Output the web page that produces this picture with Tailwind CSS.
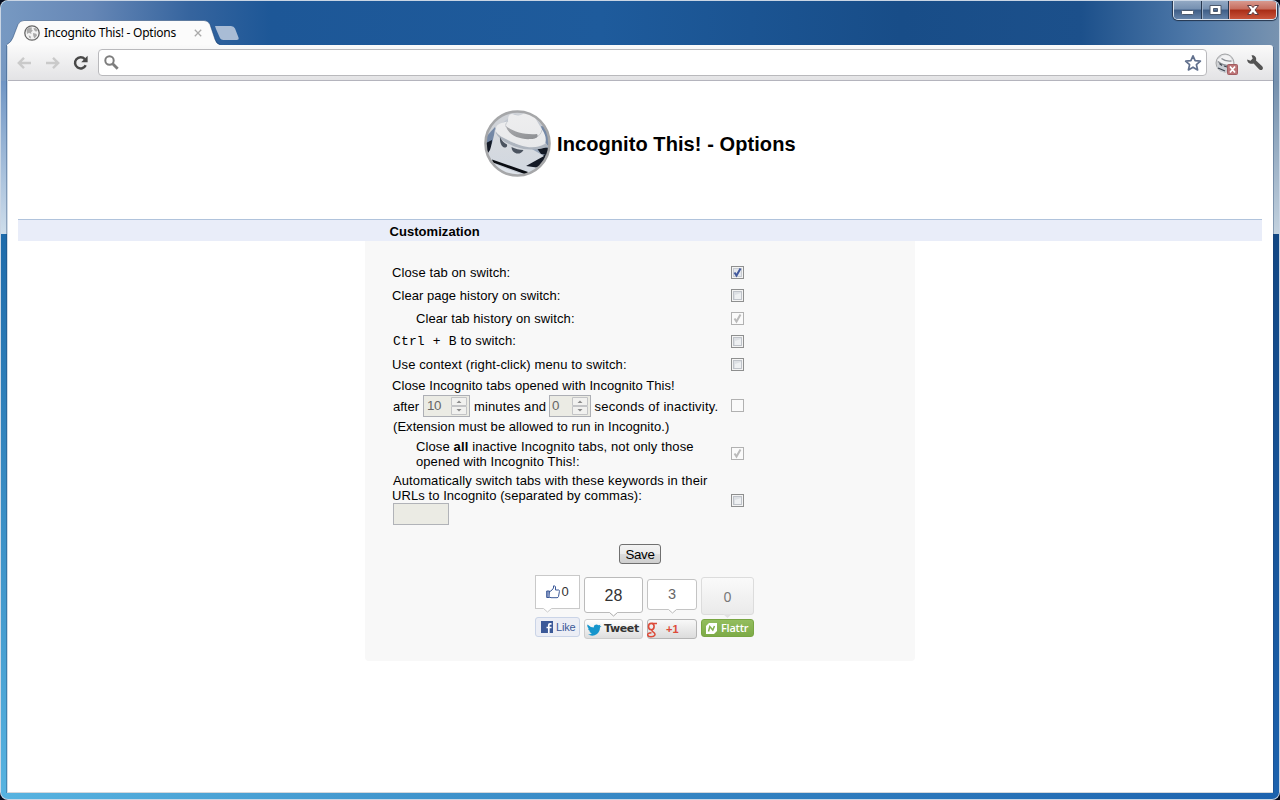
<!DOCTYPE html>
<html lang="en">
<head>
<meta charset="utf-8">
<title>Incognito This! - Options</title>
<script src="https://cdn.jsdelivr.net/npm/@tailwindcss/browser@4"></script>
</head>
<body class="w-[1280px] h-[800px] overflow-hidden bg-[#040b1c] font-['Liberation_Sans',Arial,sans-serif] text-[13px] text-black">
<svg width="0" height="0" class="absolute">
  <defs>
    <linearGradient id="silver" x1="0" y1="0" x2="0" y2="1"><stop offset="0" stop-color="#d9dbdf"/><stop offset="1" stop-color="#d0d7e0"/></linearGradient>
    <linearGradient id="hat" x1="0" y1="0" x2="0" y2="1"><stop offset="0" stop-color="#eeeeef"/><stop offset="1" stop-color="#e8e9eb"/></linearGradient>
    <linearGradient id="brim" x1="0" y1="0" x2="1" y2="1"><stop offset="0" stop-color="#a8a9ac"/><stop offset="1" stop-color="#8d8f93"/></linearGradient>
    <clipPath id="disc"><circle cx="33.500" cy="33.500" r="32"/></clipPath>
    <symbol id="spy" viewBox="0 0 67 67">
      <g clip-path="url(#disc)">
        <rect width="67" height="67" fill="#c2c8d1"/>
        <path d="M0 0h67v22L52 10 30 4 12 18 0 24z" fill="#d0d3d8"/>
        <path d="M57 16l10 2v22l-6-8zM2 27l9-10 3 12-7 14-5-4z" fill="#7488a6"/>
        <path d="M44 39l23-3v12l-8 9-14-3z" fill="#9aa8bb"/>
        <path d="M2 33l6-3-1 12-5 3zM52 37l14 1-2 7-7-1zM41 55l21-11-2 9-13 8z" fill="#141a26"/>
        <path d="M11 19c-1 8-3 14-5 21l-6 9 7 3 37 14 12-8-14-2 18-10-14-8-8-4-16-4z" fill="url(#silver)"/>
        <path d="M8 53l34 13H24L6 57z" fill="#dde2e9"/>
        <path d="M13 22c3 6 10 10 18 13s23 5 32 0" fill="none" stroke="#aeb5bf" stroke-width="3"/>
        <path d="M12 18C13 12 22 13 24 11c0-4 1-7 4-7 5 2 8 2 12-.5 4-1 8 0 10 3 3 4 5 8 8 13 3 4 5 10 3 14-5 4-15 5-24 2-8-3-14-6-20-9-4-3-6-5-5-8.500z" fill="url(#hat)"/>
        <path d="M24 11c-2 2-3 4-2 6M58 20c-1 4-3 6-6 7" fill="none" stroke="#c7cacf"/>
        <path d="M22 16c7 6 19 9 31 8 2 3-1 5-6 5-11 1-23-4-25-13z" fill="url(#brim)"/>
        <path d="M16 27c2 4 4 6 7 7.500.5 2-.5 3-2.500 3-3-1-5-5-4.500-10.500zM27.500 37c4 2 8 3 12 3-2 3-4 4-7 3.500-3-1-5-3-5-6.500z" fill="#4b535f"/>
        <path d="M8 49.500l36 12.500-2 2.500L9 52.500z" fill="#090c12"/>
      </g>
      <circle cx="33.500" cy="33.500" r="32" fill="none" stroke="#a6a7a9" stroke-width="2.600"/>
    </symbol>
  </defs>
</svg>

<div class="w-[1280px] h-[800px] rounded-lg bg-[#c9d5e4] p-px">
<div class="relative flex flex-col w-full h-full rounded-[7px] pl-[7px] pr-[6px] pt-[18px] pb-[6px] overflow-hidden bg-[linear-gradient(90deg,#57b3e0,#3e92cb_35%,#1c62ae)]">
  <!-- frame glass -->
  <div class="absolute inset-x-0 top-0 h-[233px] bg-[linear-gradient(90deg,#7799c2_0px,#6687b6_90px,#35649e_190px,#1d5797_270px,#1e5b9c_600px,#184d88_900px,#1c508b_1080px,#4e78a8_1190px,#7893b0_1278px)]"></div>
  <div class="absolute left-0 top-[80px] w-[6px] h-[153px] bg-linear-to-b from-[#6f95c4] to-[#cfdeeb]"></div>
  <div class="absolute left-0 top-[233px] w-[6px] bottom-[6px] bg-linear-to-b from-[#1e6baa] to-[#57b3e0]"></div>
  <div class="absolute left-[5px] top-[44px] w-px bottom-[6px] bg-[#1d3d66]/35"></div>
  <div class="absolute left-[6px] top-[44px] w-px bottom-[6px] bg-[#cfdae6]"></div>
  <div class="absolute right-0 top-[80px] w-[6px] h-[153px] bg-linear-to-b from-[#7590ad] to-[#c3d2df]"></div>
  <div class="absolute right-0 top-[233px] w-[6px] bottom-[6px] bg-linear-to-b from-[#124784] to-[#1c62ae]"></div>
  <div class="absolute right-[5px] top-[46px] w-px bottom-[6px] bg-[#1d3d66]/35"></div>

  <!-- window buttons -->
  <div class="absolute right-[2px] top-0 flex w-[104px] h-[19px] rounded-b-[5px] border border-t-0 border-[#dbe3ed] overflow-hidden shadow-[0_0_1px_1px_#24354d]">
    <div class="w-[28px] border-r border-[#26374f] bg-[linear-gradient(#92a8c3,#7590b1_45%,#3e5d86_50%,#6583a9)] flex items-end justify-center pb-[3px]"><svg width="13" height="6" viewBox="0 0 13 6"><rect x=".5" y=".5" width="12" height="4" rx="1" fill="#fff" stroke="#4c596c"/></svg></div>
    <div class="w-[27px] border-r border-[#26374f] border-l border-l-[#9db0c8] bg-[linear-gradient(#92a8c3,#7590b1_45%,#3e5d86_50%,#6583a9)] flex items-center justify-center"><svg width="13" height="11" viewBox="0 0 13 11"><path fill-rule="evenodd" d="M1 .5h11v9H1zm3.500 3v3h4v-3z" fill="#fff" stroke="#4c596c"/></svg></div>
    <div class="flex-1 border-l border-[#e6a59b] bg-[linear-gradient(#d8998e,#c66c5d_45%,#a92c16_50%,#c9553c)] flex items-center justify-center"><svg width="14" height="11" viewBox="0 0 14 11"><path d="M1.500.5h3.800L7 2.600 8.700.5h3.800L9 5l3.500 4.500H8.700L7 7.400 5.300 9.500H1.500L5 5z" fill="#fff" stroke="#5b3a40"/></svg></div>
  </div>

  <!-- tab strip -->
  <div class="relative h-[26px] shrink-0 flex">
    <svg class="absolute -left-px top-0" width="236" height="27" viewBox="0 0 236 27">
      <path d="M0 27v-1.500q4-2 6-7l5-13Q13 1.500 17 1.500H197q4 0 6 4l5 15q1.500 4.500 5 5.500v1z" fill="#fbfbfb"/>
      <path d="M0 25.500q4-2 6-7l5-13Q13 1.500 17 1.500H197q4 0 6 4l5 15q1.500 4.500 5 5" fill="none" stroke="#153765" stroke-opacity=".45"/>
      <path d="M208 7h16q3 0 4 2.500l3.500 9q.8 2.500-2 2.500h-13q-3 0-4-3l-3.500-8z" fill="#a9bcd5"/>
    </svg>
    <div class="relative flex items-center pl-[16px] pt-[2px] w-[200px] text-[12px] font-['Noto_Sans','Open_Sans',sans-serif]">
      <svg width="16" height="16" viewBox="0 0 16 16"><circle cx="8" cy="8" r="7.200" fill="#f3f3f3" stroke="#666" stroke-width="1.300"/><path d="M2.500 4.500 5 2.300l3 .2-.5 2 1.300 1-1.800 2 .5 1.500-2.500-1.200L3 9zM9.500 3l2.500.2 1.800 2.300-1.800 1.200-1.800-1.500zM9 8l3.200.8.9 1.400-2.600 3.300-1.200-2.500zM4.500 10.500l2 .4.5 2.600-1.500-.6z" fill="#aaa"/></svg>
      <span class="ml-[4px] leading-4 whitespace-nowrap w-[134px] tracking-[-0.240px]">Incognito This! - Options</span>
      <svg class="ml-[16px] shrink-0" width="8" height="8" viewBox="0 0 8 8"><path d="m.8.8 6.400 6.400m0-6.400L.8 7.200" stroke="#aaa" stroke-width="1.300"/></svg>
    </div>
  </div>

  <!-- toolbar -->
  <div class="relative h-[36px] shrink-0 flex items-center bg-linear-to-b from-[#fafafa] to-[#e3e3e5] border-b border-[#b4b4bd] rounded-tr-[3px] pl-[9px]">
    <svg width="15" height="14" viewBox="0 0 15 14"><path d="M14 7H2m5-5.200L1.800 7 7 12.200" fill="none" stroke="#cacaca" stroke-width="2.400"/></svg>
    <svg class="ml-[13px]" width="15" height="14" viewBox="0 0 15 14"><path d="M1 7h12M8 1.800 13.200 7 8 12.200" fill="none" stroke="#cacaca" stroke-width="2.400"/></svg>
    <svg class="ml-[13px]" width="16" height="16" viewBox="0 0 16 16"><path d="M11.800 4.100A5.600 5.600 0 1 0 12.700 10.300" fill="none" stroke="#484848" stroke-width="2.500"/><path d="M14.600.8v6.400H8.200z" fill="#484848"/></svg>
    <div class="ml-[9px] w-[1109px] h-[27px] rounded-[4px] border border-[#b9b9bc] bg-white flex items-center justify-between pl-[5px] pr-[4px]">
      <svg width="15" height="15" viewBox="0 0 15 15"><circle cx="5.500" cy="5.500" r="4.200" fill="none" stroke="#7d7d7d" stroke-width="2"/><path d="m8.700 8.700 5 5" stroke="#7d7d7d" stroke-width="2.800"/></svg>
      <svg width="18" height="18" viewBox="0 0 18 18"><path d="m9 1.800 2.100 4.900 5.300.5-4 3.500 1.200 5.200L9 13.200l-4.600 2.700 1.200-5.200-4-3.500 5.300-.5z" fill="#fff" stroke="#61708d" stroke-width="1.700" stroke-linejoin="round"/></svg>
    </div>
    <div class="relative ml-[8px] w-[24px] h-[24px]">
      <svg class="absolute left-0 top-[2px]" width="20" height="20" viewBox="0 0 20 20"><circle cx="10" cy="10" r="9" fill="#d0d2d5" stroke="#a3a4a6"/><path d="M2 15l3-5 10 3 4 2-5 4H6z" fill="#c9cdd3"/><path d="M2.500 7C4 5 6 5 7 2.500l4-.5 4 1.500L18 9v3c-6 1-14-1-15.500-5z" fill="#f2f2f3"/><path d="M6.500 5.500c3 2.500 6 3 10 2.500M3 8.500c4 3.500 9 4.500 15 4" fill="none" stroke="#8c8f95" stroke-width="1.300"/><path d="m4.500 10.500 2.500 2m2 .5 3 1M3 15l7 3" fill="none" stroke="#3f4650" stroke-width="1.300"/></svg>
      <svg class="absolute left-[12px] top-[13px]" width="11" height="11" viewBox="0 0 11 11"><rect x=".5" y=".5" width="10" height="10" rx="1" fill="#bd7476" stroke="#a25c60"/><path d="m3 2.500 5 6m0-6-5 6" stroke="#fff" stroke-width="1.700"/></svg>
    </div>
    <svg class="ml-[7px]" width="18" height="18" viewBox="0 0 18 18"><path d="M1.200 5.500 4.500 6.700 6.700 4.500 5.500 1.300C8.800.8 11 3.600 10 6.600l6.200 5.700q1.600 1.700.2 3.100t-3.100 0L7.600 9.500C4.500 10.700 1 8.900 1.200 5.500z" fill="#545454"/></svg>
  </div>

  <!-- page -->
  <div class="relative flex-1 bg-white border-b border-[#d5d8dc]">
    <header class="flex items-center h-[138px] pb-[13px] pl-[476px]">
      <svg width="67" height="67"><use href="#spy" width="67" height="67"/></svg>
      <h1 class="ml-[6px] mt-px text-[20px] leading-6 font-bold whitespace-nowrap tracking-[0.080px]">Incognito This! - Options</h1>
    </header>
    <div class="ml-[10px] mr-[11px] h-[22px] bg-[#e9edf9] border-t border-[#b0c3dc] pl-[371.500px] pt-[2px] font-bold leading-[19px] tracking-[0.050px]">Customization</div>
    <main class="w-[550px] h-[420px] ml-[357px] bg-[#f8f8f8] rounded-b-[4px] pt-[20px]">
      <div class="pl-[27px] grid grid-cols-[339px_14px] items-center whitespace-nowrap leading-[15px]">
        <div class="h-[23px] leading-[23px] tracking-[0.100px]">Close tab on switch:</div>
        <svg width="13" height="13" viewBox="0 0 13 13"><rect x=".5" y=".5" width="12" height="12" fill="#f4f4f4" stroke="#8e8f8f"/><rect x="2.500" y="2.500" width="8" height="8" fill="#e4e7ec" stroke="#c7cbd1"/><path d="m3.500 6.500 2 3 4-7" fill="none" stroke="#42599c" stroke-width="2"/></svg>
        <div class="h-[23px] leading-[23px] tracking-[0.050px]">Clear page history on switch:</div>
        <svg width="13" height="13" viewBox="0 0 13 13"><rect x=".5" y=".5" width="12" height="12" fill="#f4f4f4" stroke="#8e8f8f"/><rect x="2.500" y="2.500" width="8" height="8" fill="#dde0e4" stroke="#bfc3c9"/><path d="M4 10V6l6-2v6z" fill="#eef0f2"/></svg>
        <div class="h-[23px] leading-[23px] pl-[24px] tracking-[0.090px]">Clear tab history on switch:</div>
        <svg width="13" height="13" viewBox="0 0 13 13"><rect x=".5" y=".5" width="12" height="12" fill="#fafafa" stroke="#b1b1b1"/><path d="m3.500 6.500 2 3 4-7" fill="none" stroke="#bababa" stroke-width="2"/></svg>
        <div class="h-[23px] leading-[22px] pl-px tracking-[0.150px]"><span class="font-['Liberation_Mono',monospace]">Ctrl + B</span> to switch:</div>
        <svg width="13" height="13" viewBox="0 0 13 13"><rect x=".5" y=".5" width="12" height="12" fill="#f4f4f4" stroke="#8e8f8f"/><rect x="2.500" y="2.500" width="8" height="8" fill="#dde0e4" stroke="#bfc3c9"/><path d="M4 10V6l6-2v6z" fill="#eef0f2"/></svg>
        <div class="h-[23px] leading-[23px] tracking-[0.120px]">Use context (right-click) menu to switch:</div>
        <svg width="13" height="13" viewBox="0 0 13 13"><rect x=".5" y=".5" width="12" height="12" fill="#f4f4f4" stroke="#8e8f8f"/><rect x="2.500" y="2.500" width="8" height="8" fill="#dde0e4" stroke="#bfc3c9"/><path d="M4 10V6l6-2v6z" fill="#eef0f2"/></svg>

        <div class="h-[61px] pl-px">
          <div class="h-[18px] leading-[19px] -ml-px tracking-[0.070px]">Close Incognito tabs opened with Incognito This!</div>
          <div class="h-[23px] flex items-center">
            <span class="w-[30px] pt-px">after</span>
            <span class="flex justify-between w-[47px] h-[22px] border border-[#adafb5] bg-[#ebebe4] text-[13.330px] leading-[20px] text-[#666] pl-[3px] pr-[2px] items-center tracking-[-0.500px]">10<svg width="16" height="18" viewBox="0 0 16 18"><path d="M.5.5h15v8H.5zm0 9h15v8H.5z" fill="#f1f1ef" stroke="#c3c4c6"/><path d="m5.500 6 2.500-2.500L10.500 6zm0 6L8 14.500l2.500-2.500z" fill="#8b8b8b"/></svg></span>
            <span class="w-[79px] pl-[4px] pt-px tracking-[0.120px]">minutes and</span>
            <span class="flex justify-between w-[42px] h-[22px] border border-[#adafb5] bg-[#ebebe4] text-[13.330px] leading-[20px] text-[#666] pl-[2px] pr-[2px] items-center">0<svg width="16" height="18" viewBox="0 0 16 18"><path d="M.5.5h15v8H.5zm0 9h15v8H.5z" fill="#f1f1ef" stroke="#c3c4c6"/><path d="m5.500 6 2.500-2.500L10.500 6zm0 6L8 14.500l2.500-2.500z" fill="#8b8b8b"/></svg></span>
            <span class="pl-[3.500px] pt-px tracking-[0.220px]">seconds of inactivity.</span>
          </div>
          <div class="h-[19px] leading-[19px] tracking-[0.050px]">(Extension must be allowed to run in Incognito.)</div>
        </div>
        <svg class="mb-[2px]" width="13" height="13" viewBox="0 0 13 13"><rect x=".5" y=".5" width="12" height="12" fill="#fafafa" stroke="#b1b1b1"/></svg>

        <div class="h-[34px] pt-[2px] pl-[24px]"><span class="tracking-[0.120px]">Close <b>all</b> inactive Incognito tabs, not only those</span><br><span class="tracking-[0.070px]">opened with Incognito This!:</span></div>
        <svg class="mb-[2px]" width="13" height="13" viewBox="0 0 13 13"><rect x=".5" y=".5" width="12" height="12" fill="#fafafa" stroke="#b1b1b1"/><path d="m3.500 6.500 2 3 4-7" fill="none" stroke="#bababa" stroke-width="2"/></svg>

        <div class="h-[58px] pt-[2px] pl-px"><span class="tracking-[0.110px]">Automatically switch tabs with these keywords in their</span><br><span class="-ml-px tracking-[0.070px]">URLs to Incognito (separated by commas):</span>
          <div class="w-[56px] h-[22px] border border-[#b1b3b8] bg-[#ebebe4]"></div>
        </div>
        <svg width="13" height="13" viewBox="0 0 13 13"><rect x=".5" y=".5" width="12" height="12" fill="#f4f4f4" stroke="#8e8f8f"/><rect x="2.500" y="2.500" width="8" height="8" fill="#dde0e4" stroke="#bfc3c9"/><path d="M4 10V6l6-2v6z" fill="#eef0f2"/></svg>
      </div>

      <button class="block mx-auto mt-[15px] w-[42px] h-[20px] rounded-[3px] border border-[#707070] bg-[linear-gradient(#f3f3f3,#ebebeb_50%,#dcdcdc_50%,#cfcfcf)] text-[13.330px] leading-[19px] tracking-[-0.350px]">Save</button>

      <div class="flex items-start gap-[4px] pl-[170px] mt-[11px]">
        <div class="w-[45px]">
          <div class="relative h-[34px] border border-[#c9c9c9] bg-white flex items-center justify-center gap-[2px] text-[13px] text-[#333] pr-px">
            <svg width="14" height="14" viewBox="0 0 14 14"><path d="M.7 6h2.800v6.500H.7z" fill="#8596c2" stroke="#3b5998"/><path d="M4 6.500 6 5l1.500-2V.9q1.500-.5 2 1V5h3.200q1 .2.7 1.500l-.9 5q-.3 1.200-1.500 1.200H5l-1.500-.6" fill="#fff" stroke="#3b5998"/></svg><span class="w-[7px]">0</span>
            <svg class="absolute left-[6px] top-[32px]" width="11" height="6" viewBox="0 0 11 6"><path d="M1 0 5.500 4 10 0z" fill="#fff"/><path d="m1.500.5 4 3.500 4-3.500" fill="none" stroke="#c9c9c9"/></svg>
          </div>
          <div class="mt-[8px] h-[20px] rounded-[3px] border border-[#cad4e7] bg-[#eceef5] flex items-center gap-[3px] pl-[5px] text-[11px] text-[#3b5998] tracking-[-0.200px]"><svg width="12" height="12" viewBox="0 0 12 12"><path d="M0 0h12v12H0z" fill="#3b5998"/><path d="M10.500 2.800H9q-1.200 0-1.200 1.300V12M5.500 6.500h5" fill="none" stroke="#fff" stroke-width="1.700"/></svg>Like</div>
        </div>
        <div class="w-[59px] pt-[2px]">
          <div class="relative h-[36px] rounded-[3px] border border-[#bbb] bg-white flex items-center justify-center text-[16px] text-[#333] pt-px">28
            <svg class="absolute left-[23px] top-[34px]" width="11" height="6" viewBox="0 0 11 6"><path d="M1 0 5.500 4 10 0z" fill="#fff"/><path d="m1.500.5 4 3.500 4-3.500" fill="none" stroke="#aaa"/></svg>
          </div>
          <div class="mt-[6px] h-[20px] rounded-[3px] border border-[#ccc] bg-linear-to-b from-white to-[#dedede] flex items-center gap-[2px] pl-[2px] pt-px font-bold text-[11px] text-[#333] font-['DejaVu_Sans',sans-serif] tracking-[-0.350px]"><svg class="shrink-0" width="15" height="12" viewBox="0 0 15 12"><path d="M.5.5Q3 3.200 6.800 3.500 6.500.6 9.300.4q1.300 0 2.200.9L13.500.7l-.8 1.500 1.800-.2-1.500 1.600Q12.800 8 10 10q-4.200 3-9 .5 2.500 0 3.800-1.300-2-.3-2.500-2h1Q1 6.300 1 4.500l1 .2Q-.4 3 .5.5z" fill="#1595cc"/></svg>Tweet</div>
        </div>
        <div class="w-[50px] pt-[4px]">
          <div class="relative h-[31px] rounded-[3px] border border-[#c4c4c4] bg-white flex items-center justify-center text-[14.500px] text-[#666] pt-px">3
            <svg class="absolute left-[19px] top-[29px]" width="11" height="6" viewBox="0 0 11 6"><path d="M1 0 5.500 4 10 0z" fill="#fff"/><path d="m1.500.5 4 3.500 4-3.500" fill="none" stroke="#bbb"/></svg>
          </div>
          <div class="mt-[9px] h-[20px] rounded-[3px] border border-[#b5b5b5] bg-linear-to-b from-[#f8f8f8] to-[#dcdcdc] flex items-center text-[11px] font-bold text-[#dd4b39]"><svg class="-ml-px mt-[2px]" width="11" height="16" viewBox="0 0 11 16"><path d="M10 1.500H5" fill="none" stroke="#dd4b39" stroke-width="1.500"/><ellipse cx="4.300" cy="4.600" rx="2.800" ry="3.200" fill="none" stroke="#dd4b39" stroke-width="1.600"/><path d="M5.500 7.500q-1.500 1 .5 2.300C9.500 12 8 14.800 4 14.800S-1 11 4.500 10.700" fill="none" stroke="#dd4b39" stroke-width="1.500"/></svg><span class="ml-[8px]">+1</span></div>
        </div>
        <div class="w-[53px] pt-[2px]">
          <div class="relative h-[38px] rounded-[3px] border border-[#dcdcdc] bg-linear-to-b from-[#fafafa] to-[#eaeaea] flex items-center justify-center text-[14px] text-[#777] font-['Noto_Sans',sans-serif]">0
            <svg class="absolute left-[20px] top-[36px]" width="11" height="6" viewBox="0 0 11 6"><path d="M1 0 5.500 4 10 0z" fill="#e2e2e2"/></svg>
          </div>
          <div class="mt-[4px] h-[18px] rounded-[3px] border border-[#79a643] bg-linear-to-b from-[#93bd5e] to-[#7dab47] flex items-center gap-[4px] pl-[4px] text-[11px] text-white"><svg width="11" height="11" viewBox="0 0 11 11"><path d="M3 0h8v8l-3 3H0V3z" fill="#fff"/><path d="m2.500 8.500 1.300-5 3 3.500 1.700-4" fill="none" stroke="#84b14f" stroke-width="1.500"/></svg><span class="font-['Open_Sans',sans-serif] font-semibold tracking-[-0.250px]">Flattr</span></div>
        </div>
      </div>
    </main>
  </div>
</div>
</div>
</body>
</html>
